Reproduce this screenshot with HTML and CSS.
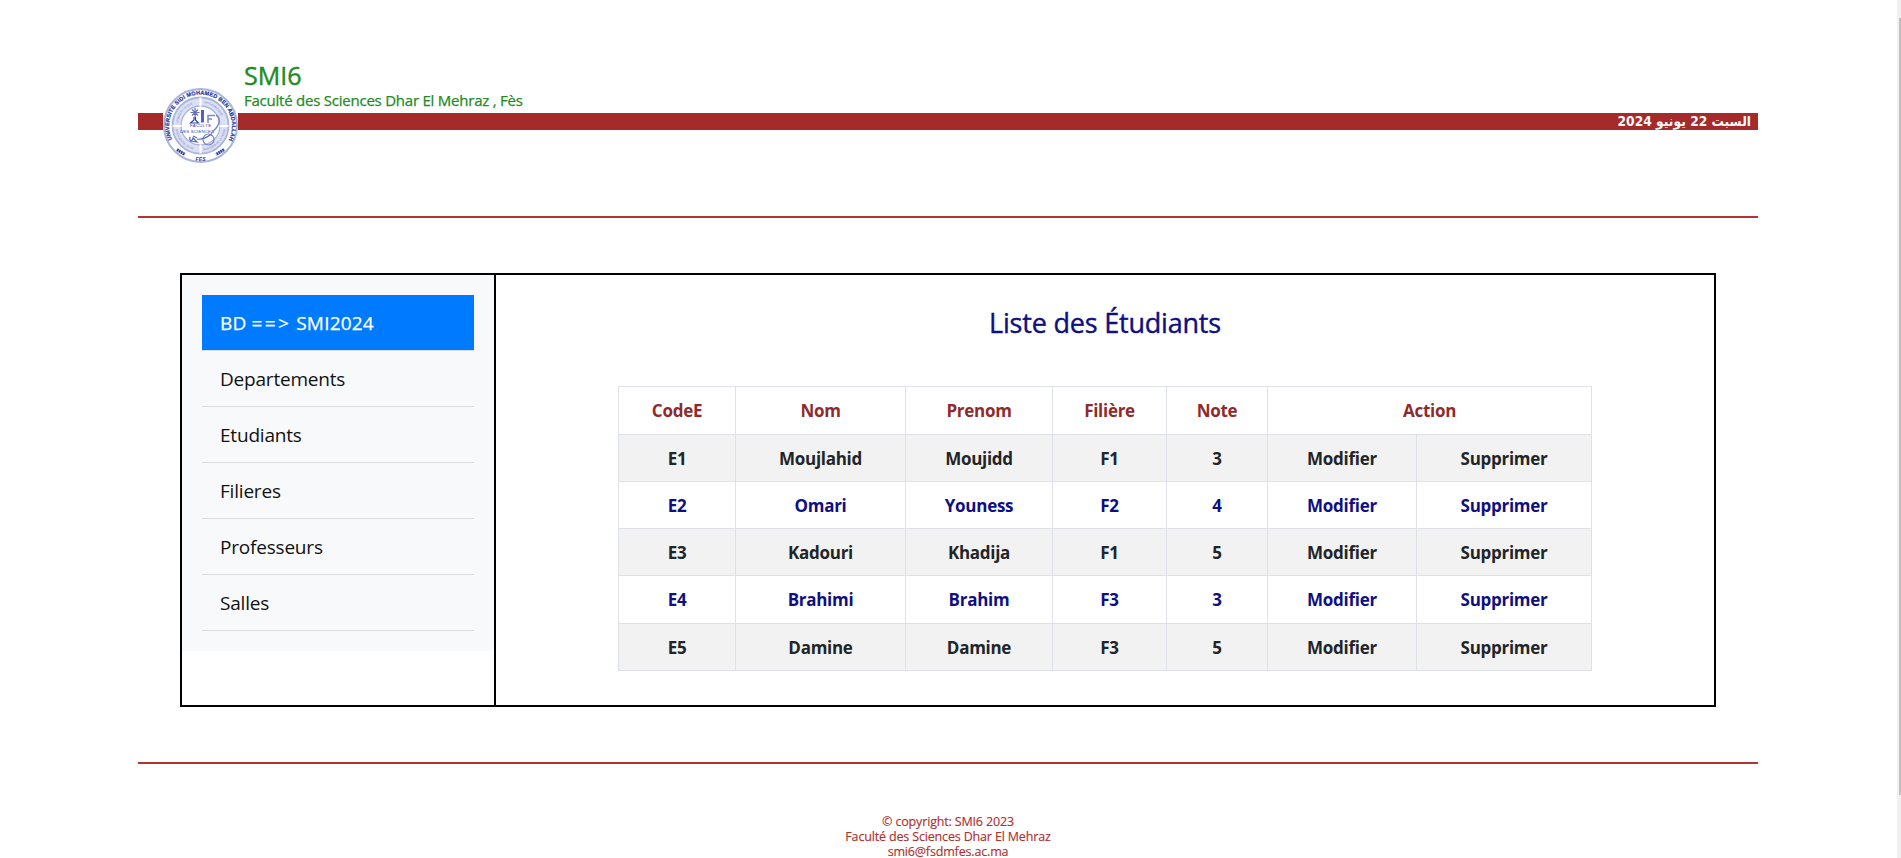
FILE: index.html
```html
<!DOCTYPE html>
<html lang="fr">
<head>
<meta charset="utf-8">
<title>SMI6</title>
<link rel="stylesheet" href="styles.css">
</head>
<body>
<div class="page">
  <header class="header">
    <h1 class="brand">SMI6</h1>
    <h2 class="faculty">Faculté des Sciences Dhar El Mehraz , Fès</h2>
    <div class="bar"><span class="date" dir="rtl">السبت 22 يونيو 2024</span></div>
    <svg class="logo" viewBox="0 0 75 75" role="img" aria-label="Logo">
      <defs>
        <path id="arcTop" d="M9 51.500A31.500 31.500 0 1 1 66 51.500"/>
        <path id="arcLeft" d="M15 35A22.600 22.600 0 0 1 35 15"/>
        <path id="arcRight" d="M41 15A22.600 22.600 0 0 1 60 35"/>
        <path id="arcLowLeft" d="M12.500 41A25 25 0 0 0 35 62.500"/>
        <path id="arcLowRight" d="M40 62.500A25 25 0 0 0 62.500 41"/>
      </defs>
      <rect width="75" height="75" rx="22" fill="#fff"/>
      <circle cx="37.500" cy="37.500" r="36.500" fill="#fff" stroke="#a9b3dc" stroke-width="2"/>
      <circle cx="37.500" cy="37.500" r="23.800" fill="none" stroke="#dbe0f3" stroke-width="7.500"/>
      <circle cx="37.500" cy="37.500" r="28" fill="none" stroke="#aab4dc" stroke-width="1.800"/>
      <circle cx="37.500" cy="37.500" r="19.500" fill="#fff" stroke="#a9b3dc" stroke-width="1.300"/>
      <path d="M37.500 9.500v9M37.500 56.500v9M9.500 38h9M56.500 38h9" stroke="#fff" stroke-width="2"/>
      <g class="seal-text">
        <text class="seal-outer"><textPath href="#arcTop" textLength="127" lengthAdjust="spacing">UNIVERSITE SIDI MOHAMED BEN ABDALLAH</textPath></text>
        <text class="seal-inner"><textPath href="#arcLeft">CHIMIE PHYSIQUE</textPath></text>
        <text class="seal-inner"><textPath href="#arcRight">MATHEMATIQUE</textPath></text>
        <text class="seal-inner"><textPath href="#arcLowLeft">SCIENCES DE LA VIE</textPath></text>
        <text class="seal-inner"><textPath href="#arcLowRight">SCIENCES DE LA TERRE</textPath></text>
        <text class="seal-mid" x="27" y="38.500" textLength="21">FACULTE</text>
        <text class="seal-mid" x="17" y="45" textLength="34">DES SCIENCES</text>
        <text class="seal-fes" x="32.500" y="73" textLength="10">FES</text>
      </g>
      <path d="M27.500 24.500h9M32 20v9M29 21.500l6 6M35 21.500l-6 6" stroke="#6675bd" stroke-width="1.200"/>
      <path d="M31 29v3l-3.500 3h8L32.500 32v-3" fill="none" stroke="#3545a5" stroke-width="1.200"/>
      <path d="M39.500 22v12.500" stroke="#5362b2" stroke-width="3"/>
      <path d="M45 35v-7.500h7M45 31h4M53 27c4 2 4 8 1 12s-7 6-6 9" fill="none" stroke="#7d8ac7" stroke-width="1.500"/>
      <circle cx="45.500" cy="51.500" r="5.500" fill="none" stroke="#7180c3" stroke-width="1.200"/>
      <path d="M34 51c5 1 9-1 13-4M27 49c-1 4 2 5 3 1l4 4-7-1M30 48l4 2" fill="none" stroke="#5766b4" stroke-width="1.200"/>
      <path d="M14 61.500l8 5M61 61.500l-8 5" stroke="#2c3ca0" stroke-width="3" stroke-dasharray="1.800 .5"/>
    </svg>
  </header>
  <hr class="rule">
  <main class="frame">
    <aside class="side">
      <nav class="menu">
        <a class="item active">BD <span class="arrow">==&gt;</span> SMI2024</a>
        <a class="item">Departements</a>
        <a class="item">Etudiants</a>
        <a class="item">Filieres</a>
        <a class="item">Professeurs</a>
        <a class="item">Salles</a>
      </nav>
    </aside>
    <section class="content">
      <h2 class="title">Liste des Étudiants</h2>
      <table class="students">
        <colgroup><col class="c-code"><col class="c-nom"><col class="c-prenom"><col class="c-fil"><col class="c-note"><col class="c-mod"><col class="c-sup"></colgroup>
        <thead><tr><th>CodeE</th><th>Nom</th><th>Prenom</th><th>Filière</th><th>Note</th><th colspan="2">Action</th></tr></thead>
        <tbody>
          <tr><td>E1</td><td>Moujlahid</td><td>Moujidd</td><td>F1</td><td>3</td><td>Modifier</td><td>Supprimer</td></tr>
          <tr><td>E2</td><td>Omari</td><td>Youness</td><td>F2</td><td>4</td><td>Modifier</td><td>Supprimer</td></tr>
          <tr><td>E3</td><td>Kadouri</td><td>Khadija</td><td>F1</td><td>5</td><td>Modifier</td><td>Supprimer</td></tr>
          <tr class="tall"><td>E4</td><td>Brahimi</td><td>Brahim</td><td>F3</td><td>3</td><td>Modifier</td><td>Supprimer</td></tr>
          <tr><td>E5</td><td>Damine</td><td>Damine</td><td>F3</td><td>5</td><td>Modifier</td><td>Supprimer</td></tr>
        </tbody>
      </table>
    </section>
  </main>
  <hr class="rule">
  <footer class="footer">
    <div>© copyright: SMI6 2023</div>
    <div>Faculté des Sciences Dhar El Mehraz</div>
    <div>smi6@fsdmfes.ac.ma</div>
  </footer>
</div>
<div class="scroll-track"><div class="scroll-thumb"></div></div>
</body>
</html>
```
FILE: styles.css
```css
* { box-sizing: border-box; }
html, body { height: 100%; }
body {
  margin: 0;
  display: flex;
  justify-content: space-between;
  overflow: hidden;
  background: #fff;
  color: #212529;
  font-family: "Open Sans", "Noto Sans", sans-serif;
}
.page { width: 1620px; margin-left: 138px; }
.header { position: relative; height: 216px; padding-top: 60px; }
.brand, .faculty { margin: 0 0 0 106px; color: #228b22; white-space: nowrap; }
.brand { font-size: 25px; line-height: 30px; font-weight: 400; -webkit-text-stroke: 0.4px; }
.faculty { font-size: 15px; line-height: 20px; height: 23px; font-weight: 400; letter-spacing: -0.23px; -webkit-text-stroke: 0.25px; }
.bar {
  height: 17px;
  background: #a52a2a;
  color: #f8f9fa;
  padding-right: 7px;
  text-align: right;
  font: 700 13.700px/16px "DejaVu Sans Condensed", "DejaVu Sans", sans-serif;
  font-stretch: condensed;
}
.logo { position: absolute; left: 25px; top: 88px; width: 75px; height: 75px; overflow: visible; }
.seal-text { font-family: "Liberation Sans", sans-serif; fill: #2c3ca0; }
.seal-outer { font-size: 5.500px; font-weight: 700; stroke: #2c3ca0; stroke-width: 0.25px; }
.seal-inner { font-size: 2.800px; fill: #7683c2; }
.seal-mid { font-size: 4.300px; fill: #3343a5; }
.seal-fes { font-size: 5px; font-weight: 700; font-style: italic; }
.rule { height: 2px; margin: 0; border: 0; background: #b83232; }
.frame {
  display: flex;
  width: 1536px;
  height: 434px;
  margin: 55px 0 55px 42px;
  border: 2px solid #000;
}
.side { width: 314px; border-right: 2px solid #000; }
.menu { padding: 20px; background: #f8f9fb; }
.item {
  display: block;
  height: 56px;
  padding-left: 18px;
  border-bottom: 1px solid #dadce0;
  color: #111;
  font-size: 19px;
  line-height: 56px;
  letter-spacing: -0.2px;
}
.item.active { background: #007bff; background-clip: padding-box; color: #fff; letter-spacing: 0.2px; -webkit-text-stroke: 0.25px; }
.arrow { letter-spacing: 2.300px; }
.content { flex: 1; display: flex; flex-direction: column; align-items: center; }
.title { margin: 29px 0 0; height: 82px; color: #0f0f80; font-size: 27px; line-height: 38px; font-weight: 400; letter-spacing: -0.2px; -webkit-text-stroke: 0.4px; }
.students { width: 973px; table-layout: fixed; border-collapse: collapse; font-size: 17px; font-weight: 700; letter-spacing: -0.28px; text-align: center; }
.students th, .students td { padding: 1px 0 0; height: 47px; border: 1px solid #dee2e6; line-height: 24px; }
.students th { height: 48px; color: #8f2b2b; font-weight: 700; }
.students .tall td { height: 48px; }
.students tbody tr:nth-child(odd) { background: #f2f2f2; }
.students tbody tr:nth-child(even) { color: #0f0f80; }
.c-code { width: 117px; }
.c-nom { width: 170px; }
.c-prenom { width: 147px; }
.c-fil { width: 114px; }
.c-note { width: 101px; }
.c-mod { width: 149px; }
.c-sup { width: 175px; }
.footer { padding-top: 50px; color: #b22f2f; font-size: 12.500px; line-height: 15px; text-align: center; letter-spacing: -0.16px; -webkit-text-stroke: 0.15px; }
.scroll-track { width: 4px; height: 100%; padding: 18px 0 0 2px; background: #f0f0f0; }
.scroll-thumb { height: 777px; background: #c1c1c1; }
```
